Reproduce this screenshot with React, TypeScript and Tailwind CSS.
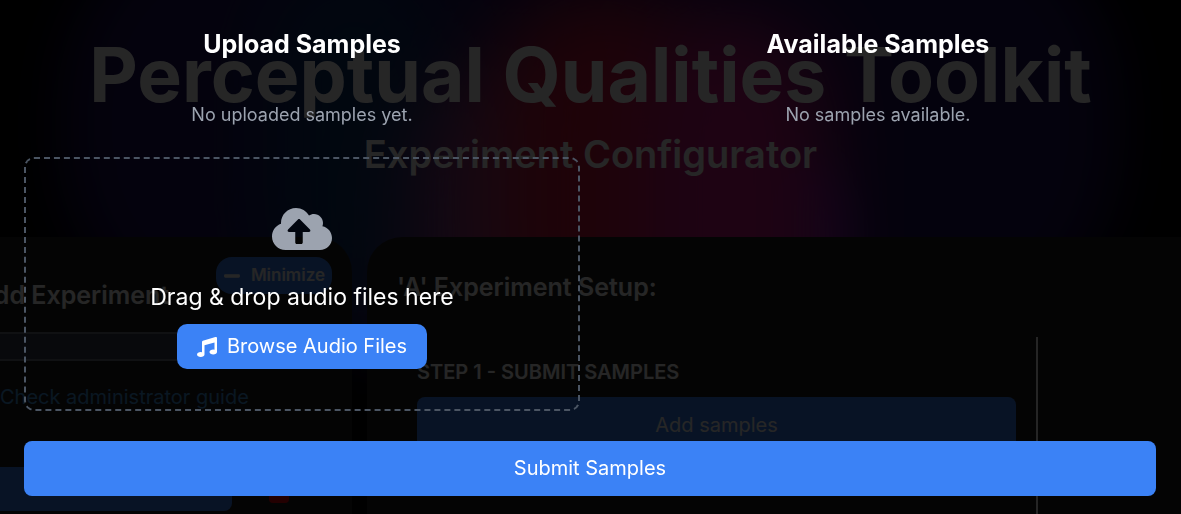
import { FaCloudUploadAlt, FaMinus, FaMusic } from "react-icons/fa";

function Backdrop() {
  return (
    <div aria-hidden="true" className="pointer-events-none absolute inset-0 overflow-hidden">
      <div className="absolute inset-x-[5%] -top-24 h-[440px] rounded-[200px] bg-[#1e1058] blur-[30px]" />
      <div className="absolute -top-10 left-[22%] h-[360px] w-[16%] rounded-full bg-[#0c3068] blur-[40px]" />
      <div className="absolute top-40 left-[62%] h-[160px] w-[10%] rounded-full bg-[#4a1eb0] blur-[20px]" />
      <div className="absolute top-16 left-[35%] h-[360px] w-[18%] rounded-full bg-[#8a3f86] blur-[40px]" />
      <div className="absolute -top-2 left-[42%] h-[380px] w-[18%] rounded-full bg-[#c81838] blur-[40px]" />
      <div className="absolute top-4 left-[54%] h-[380px] w-[16%] rounded-full bg-[#c81a80] blur-[40px]" />
    </div>
  );
}

function Sidebar() {
  return (
    <aside className="-ml-11 flex w-[396px] flex-none flex-col rounded-t-[35px] bg-[#1f1f1f] p-5">
      <div className="flex items-start justify-between">
        <h2 className="pt-5 text-[25px] leading-[36px] font-semibold">Add Experiment</h2>
        <button
          type="button"
          className="flex h-[37px] items-center gap-2.5 rounded-2xl bg-[#3b82f6] px-[7px] text-[17px] font-semibold"
        >
          <FaMinus className="size-[18px]" />
          Minimize
        </button>
      </div>
      <input
        type="text"
        aria-label="Experiment name"
        className="mt-[19px] h-[29px] w-full border-2 border-[#6b7280] bg-[#374151]"
      />
      <a href="#guide" className="mt-5 pl-6 text-[20px] leading-[32px] text-[#4299e1]">
        Check administrator guide
      </a>
      <div className="mt-[54px] flex items-start">
        <button type="button" aria-label="Create experiment" className="h-[44px] w-[256px] rounded-lg bg-[#3b82f6]" />
        <button type="button" aria-label="Remove experiment" className="ml-[37px] h-9 w-5 rounded-sm bg-red-600" />
      </div>
    </aside>
  );
}

function SetupPanel() {
  return (
    <section className="-mr-10 flex flex-1 flex-col rounded-t-[35px] bg-[#1f1f1f] px-[30px] pt-8">
      <h2 className="text-[25px] leading-[36px] font-semibold">&apos;A&apos; Experiment Setup:</h2>
      <div className="mt-8 flex flex-1">
        <div className="flex flex-1 flex-col border-r-2 border-white/95 px-5 pt-5">
          <h3 className="text-[20px] leading-[30px] font-semibold">STEP 1 - SUBMIT SAMPLES</h3>
          <button type="button" className="mt-2.5 h-[55px] rounded-lg bg-[#3b82f6] text-[20px]">
            Add samples
          </button>
        </div>
        <div className="w-[153px] flex-none" />
      </div>
    </section>
  );
}

function SampleDialog() {
  return (
    <div
      role="dialog"
      aria-modal="true"
      aria-label="Submit samples"
      className="fixed inset-0 flex flex-col overflow-auto bg-black/85 pt-[26px] pr-[25px] pb-4 pl-6"
    >
      <div className="grid grid-cols-2 gap-5 text-center">
        <section>
          <h2 className="text-[25px] leading-[36px] font-bold">Upload Samples</h2>
          <p className="mt-10 text-[18px] leading-[25px] text-[#9ca3af]">No uploaded samples yet.</p>
          <div className="mt-[30px] flex flex-col items-center rounded-[10px] border-2 border-dashed border-[#4b5563] p-10">
            <FaCloudUploadAlt className="size-[60px] text-[#9ca3af]" />
            <p className="mt-5 text-[23px] leading-[36px]">Drag &amp; drop audio files here</p>
            <button
              type="button"
              className="mt-[9px] flex h-[45px] items-center gap-2.5 rounded-[10px] bg-[#3b82f6] px-5 text-[20px] leading-[29px]"
            >
              <FaMusic className="size-5" />
              Browse Audio Files
            </button>
          </div>
        </section>
        <section>
          <h2 className="text-[25px] leading-[36px] font-bold">Available Samples</h2>
          <p className="mt-10 text-[18px] leading-[25px] text-[#9ca3af]">No samples available.</p>
        </section>
      </div>
      <button type="button" className="mt-[30px] h-[55px] flex-none rounded-lg bg-[#3b82f6] text-[20px] leading-[29px]">
        Submit Samples
      </button>
    </div>
  );
}

export default function App() {
  return (
    <div className="relative flex h-screen flex-col overflow-hidden bg-black font-['Inter',sans-serif] text-white">
      <Backdrop />
      <header className="relative pt-[37px] text-center">
        <h1 className="text-[75px] leading-[75px] font-bold">Perceptual Qualities Toolkit</h1>
        <p className="mt-5 text-[38px] leading-[45px] font-semibold">Experiment Configurator</p>
      </header>
      <main className="relative mt-[60px] flex flex-1 gap-[15px]">
        <Sidebar />
        <SetupPanel />
      </main>
      <SampleDialog />
    </div>
  );
}
